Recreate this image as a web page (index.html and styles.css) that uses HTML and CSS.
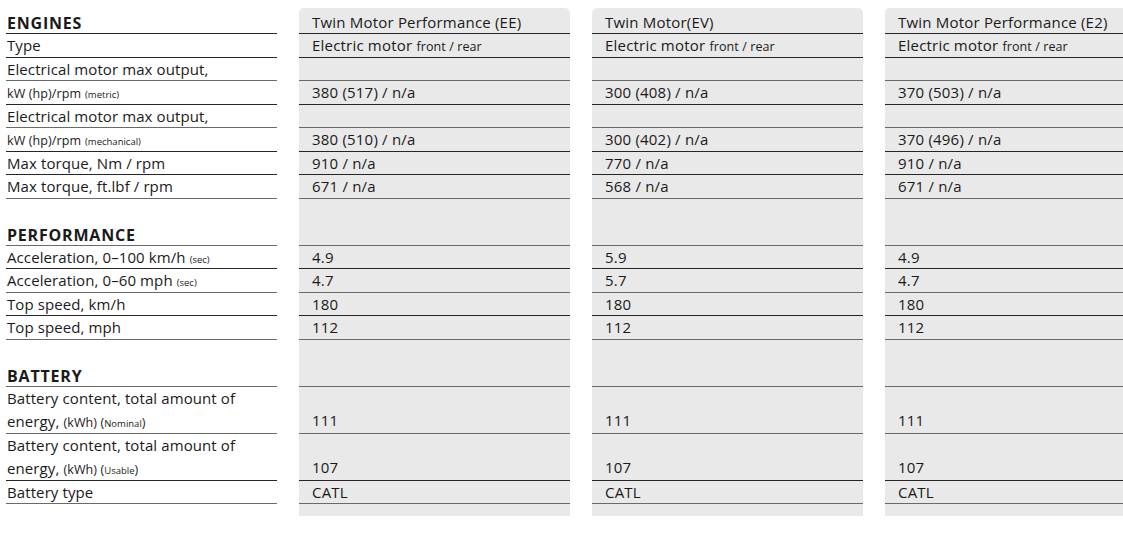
FILE: index.html
```html
<!DOCTYPE html>
<html lang="en">
<head>
<meta charset="utf-8">
<title>Specifications</title>
<link rel="stylesheet" href="styles.css">
</head>
<body>
<div class="specs">
  <div class="col labels">
    <div class="row head">ENGINES</div>
    <div class="row">Type</div>
    <div class="row soft">Electrical motor max output,</div>
    <div class="row"><span class="sm">kW (hp)/rpm</span> <span class="xs">(metric)</span></div>
    <div class="row soft">Electrical motor max output,</div>
    <div class="row"><span class="sm">kW (hp)/rpm</span> <span class="xs">(mechanical)</span></div>
    <div class="row">Max torque, Nm / rpm</div>
    <div class="row soft">Max torque, ft.lbf / rpm</div>
    <div class="row gap"></div>
    <div class="row head soft">PERFORMANCE</div>
    <div class="row">Acceleration, 0–100 km/h <span class="xs">(sec)</span></div>
    <div class="row soft">Acceleration, 0–60 mph <span class="xs">(sec)</span></div>
    <div class="row">Top speed, km/h</div>
    <div class="row soft">Top speed, mph</div>
    <div class="row gap"></div>
    <div class="row head soft">BATTERY</div>
    <div class="row double soft">Battery content, total amount of<br>energy, <span class="sm">(kWh) (<span class="xs">Nominal</span>)</span></div>
    <div class="row double">Battery content, total amount of<br>energy, <span class="sm">(kWh) (<span class="xs">Usable</span>)</span></div>
    <div class="row soft">Battery type</div>
  </div>

  <div class="col model">
    <div class="row">Twin Motor Performance (EE)</div>
    <div class="row">Electric motor <span class="sm">front / rear</span></div>
    <div class="row soft"></div>
    <div class="row">380 (517) / n/a</div>
    <div class="row soft"></div>
    <div class="row">380 (510) / n/a</div>
    <div class="row">910 / n/a</div>
    <div class="row soft">671 / n/a</div>
    <div class="row double soft"></div>
    <div class="row">4.9</div>
    <div class="row soft">4.7</div>
    <div class="row">180</div>
    <div class="row soft">112</div>
    <div class="row double soft"></div>
    <div class="row double soft">111</div>
    <div class="row double">107</div>
    <div class="row soft">CATL</div>
  </div>

  <div class="col model">
    <div class="row">Twin Motor(EV)</div>
    <div class="row">Electric motor <span class="sm">front / rear</span></div>
    <div class="row soft"></div>
    <div class="row">300 (408) / n/a</div>
    <div class="row soft"></div>
    <div class="row">300 (402) / n/a</div>
    <div class="row">770 / n/a</div>
    <div class="row soft">568 / n/a</div>
    <div class="row double soft"></div>
    <div class="row">5.9</div>
    <div class="row soft">5.7</div>
    <div class="row">180</div>
    <div class="row soft">112</div>
    <div class="row double soft"></div>
    <div class="row double soft">111</div>
    <div class="row double">107</div>
    <div class="row soft">CATL</div>
  </div>

  <div class="col model">
    <div class="row">Twin Motor Performance (E2)</div>
    <div class="row">Electric motor <span class="sm">front / rear</span></div>
    <div class="row soft"></div>
    <div class="row">370 (503) / n/a</div>
    <div class="row soft"></div>
    <div class="row">370 (496) / n/a</div>
    <div class="row">910 / n/a</div>
    <div class="row soft">671 / n/a</div>
    <div class="row double soft"></div>
    <div class="row">4.9</div>
    <div class="row soft">4.7</div>
    <div class="row">180</div>
    <div class="row soft">112</div>
    <div class="row double soft"></div>
    <div class="row double soft">111</div>
    <div class="row double">107</div>
    <div class="row soft">CATL</div>
  </div>
</div>
</body>
</html>
```

FILE: styles.css
```css
html, body {
  margin: 0;
  padding: 0;
  background: #ffffff;
  overflow: hidden;
}

body {
  font-family: "Open Sans", "Liberation Sans", Arial, sans-serif;
  font-size: 15px;
  letter-spacing: 0.1px;
  color: #1a1a1a;
}

.specs {
  display: grid;
  grid-template-columns: repeat(4, 271px);
  column-gap: 22px;
  align-items: start;
  padding: 8px 0 0 6px;
  width: max-content;
}

.col {
  display: flex;
  flex-direction: column;
  padding-top: 2.5px;
}

.model {
  background: #e9e9e9;
  border-radius: 5px 5px 0 0;
  padding-bottom: 12px;
  letter-spacing: 0.2px;
}

.row {
  box-sizing: border-box;
  height: 23.5px;
  line-height: 22.5px;
  border-bottom: 1px solid #262626;
  white-space: nowrap;
}

.row.soft {
  border-bottom: 1.5px solid #6a6a6a;
}

.labels .row {
  padding-left: 1px;
}

.model .row {
  padding-left: 13px;
}

.row.double {
  height: 47px;
  display: flex;
  flex-direction: column;
  justify-content: flex-end;
  line-height: 23.5px;
  padding-bottom: 0.5px;
  white-space: normal;
}

.labels .row.double {
  display: block;
}

.row.gap {
  border-bottom: none;
}

.row.head {
  font-size: 16px;
  font-weight: 700;
  letter-spacing: 0.8px;
  line-height: 24px;
  padding-top: 0.5px;
}

.sm {
  font-size: 12.5px;
  letter-spacing: 0.1px;
}

.xs {
  font-size: 9.5px;
  letter-spacing: 0;
}
```
